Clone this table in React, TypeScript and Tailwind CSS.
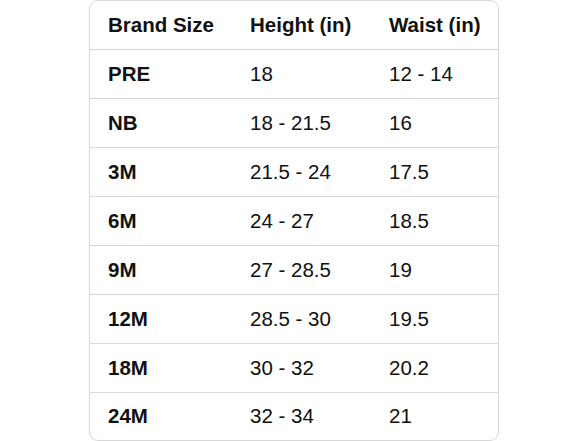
import React from "react";

const rows: [string, string, string][] = [
  ["PRE", "18", "12 - 14"],
  ["NB", "18 - 21.5", "16"],
  ["3M", "21.5 - 24", "17.5"],
  ["6M", "24 - 27", "18.5"],
  ["9M", "27 - 28.5", "19"],
  ["12M", "28.5 - 30", "19.5"],
  ["18M", "30 - 32", "20.2"],
  ["24M", "32 - 34", "21"],
];

export default function App() {
  return (
    <div
      className="w-[588px] h-[441px] bg-white flex justify-center overflow-hidden"
      style={{ fontFamily: '"Liberation Sans", Arial, sans-serif' }}
    >
      <div className="w-[410px] h-[441px] border border-[#d5d9d9] rounded-[9px] text-[20.5px] text-[#111111] flex flex-col">
        <div className="grid grid-cols-[142px_139px_1fr] pl-[18px] h-[49px] shrink-0 items-center border-b border-[#d5d9d9] font-bold">
          <div>Brand Size</div>
          <div>Height (in)</div>
          <div>Waist (in)</div>
        </div>
        {rows.map((r, i) => (
          <div
            key={r[0]}
            className={
              i === rows.length - 1
                ? "grid grid-cols-[142px_139px_1fr] pl-[18px] flex-1 items-center"
                : "grid grid-cols-[142px_139px_1fr] pl-[18px] h-[49px] shrink-0 items-center border-b border-[#d5d9d9]"
            }
          >
            <div className="font-bold">{r[0]}</div>
            <div>{r[1]}</div>
            <div>{r[2]}</div>
          </div>
        ))}
      </div>
    </div>
  );
}
